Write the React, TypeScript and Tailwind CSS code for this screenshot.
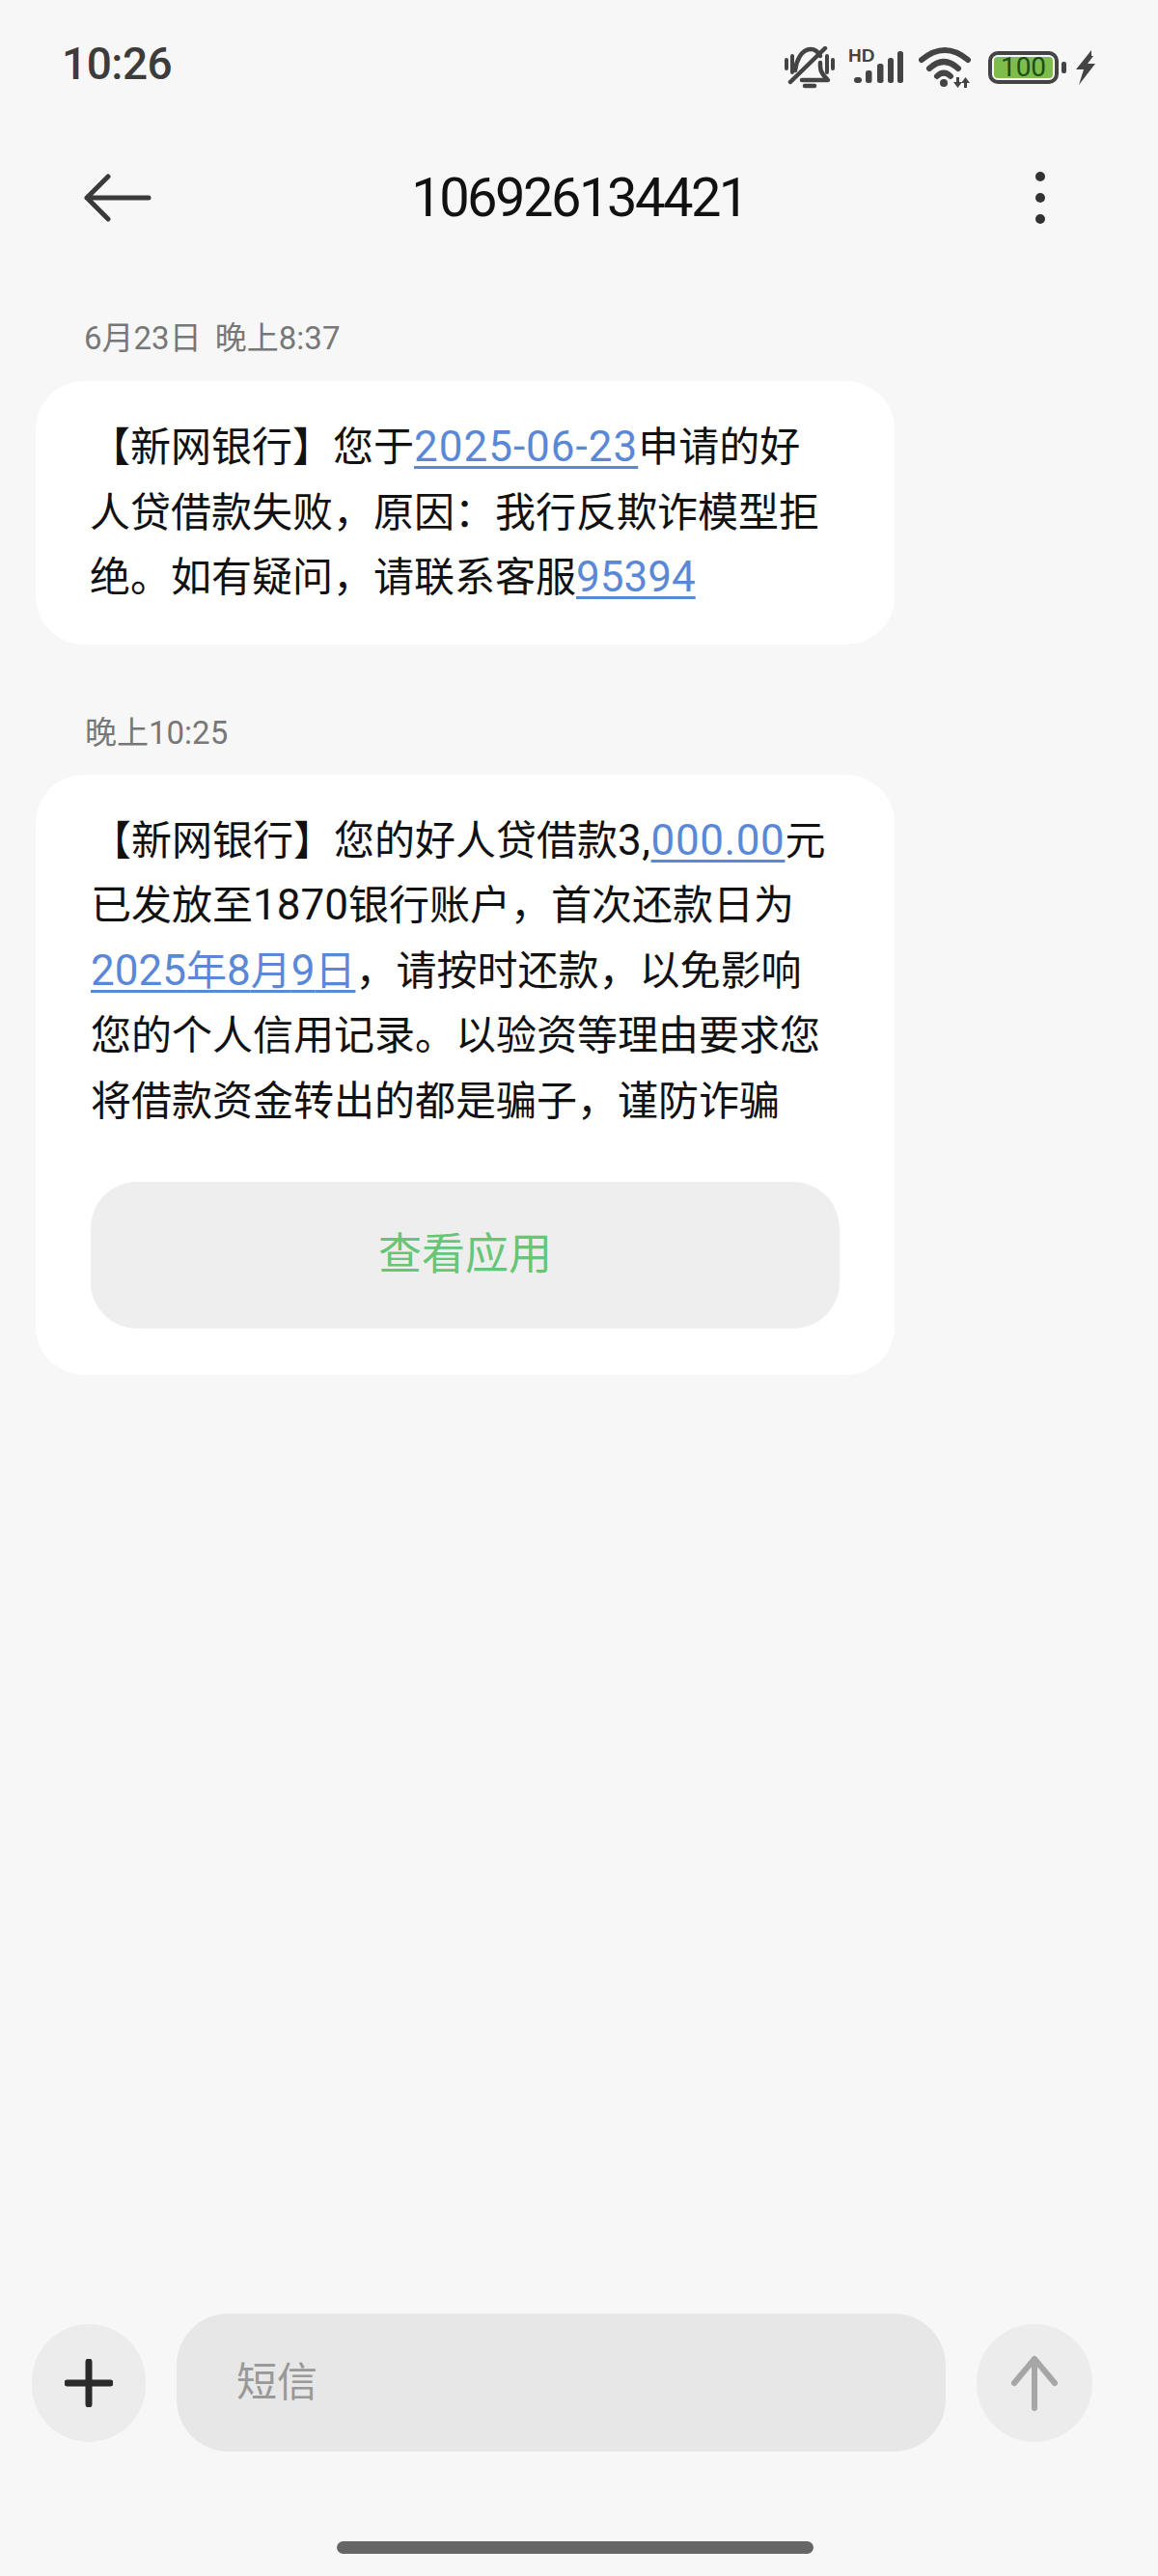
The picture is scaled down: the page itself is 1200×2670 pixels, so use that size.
const CJK = '[font-family:Roboto,"Noto_Sans_CJK_SC",sans-serif]';

function Link({ children }: { children: React.ReactNode }) {
  return <span className="text-[#5b88d6] underline decoration-[2.5px] underline-offset-[5px]">{children}</span>;
}

function Num({ children }: { children: React.ReactNode }) {
  return <span className="text-[44px]">{children}</span>;
}

function StatusIcons() {
  return (
    <div className="flex items-center">
      {/* muted bell */}
      <svg width="52" height="44" viewBox="0 0 52 44" fill="none" stroke="#444" strokeWidth="4.5" strokeLinecap="round" strokeLinejoin="round">
        <path d="M11 25 C12 16 17 3 27 3 C32 3 35 6 37 10" />
        <path d="M37 17 V21 C37 27 41 31 45 35 H18" />
        <path d="M6 37 L42 2" />
        <path d="M21 41 H31" />
        <path d="M2 14 V23 M8 10 V27 M44 10 V27 M50 14 V23" strokeWidth="4" />
      </svg>
      {/* signal */}
      <svg className="ml-[14px]" width="57" height="44" viewBox="0 0 57 44" fill="#444">
        <text x="0" y="16" fontSize="19" fontWeight="700" fontFamily="Liberation Sans">HD</text>
        <rect x="6" y="32" width="8" height="6" rx="3" />
        <rect x="18" y="25" width="6.5" height="13" rx="2.5" />
        <rect x="30" y="18" width="6.5" height="20" rx="2.5" />
        <rect x="41" y="12" width="6" height="26" rx="2.5" />
        <rect x="51" y="5" width="6" height="33" rx="2.5" />
      </svg>
      {/* wifi */}
      <svg className="ml-[16px]" width="54" height="44" viewBox="0 0 54 44" fill="none" stroke="#444" strokeWidth="6" strokeLinecap="round">
        <path d="M3 14 Q27 -6 51 14" />
        <path d="M11 23 Q26 9 41 23" />
        <path d="M19 31 Q26 24 33 31" />
        <circle cx="26" cy="38" r="4" fill="#444" stroke="none" />
        <path d="M39 32 H42 V37 H45 L40.5 43 L36 37 H39 Z M47 43 H50 V38 H53 L48.5 32 L44 38 H47 Z" fill="#444" stroke="none" />
      </svg>
      {/* battery */}
      <div className="ml-[18px] flex items-center">
        <div className="flex h-[34px] w-[73px] items-center justify-center rounded-[10px] border-[4px] border-[#444] p-[2px]">
          <div className="flex h-full w-full items-center justify-center rounded-[4px] bg-[#7ebd4c] font-['Roboto'] text-[28px] leading-none text-[#1c4f10]">
            100
          </div>
        </div>
        <div className="ml-[3px] h-[12px] w-[5px] rounded-[2px] bg-[#444]" />
      </div>
      {/* charging bolt */}
      <svg className="ml-[9px]" width="22" height="36" viewBox="0 0 22 36" fill="#444">
        <path d="M17 0 L1 20 L9 20 L4 36 L21 14 L13 14 L19 6 L17 6 Z" />
      </svg>
    </div>
  );
}

export default function App() {
  return (
    <div className={`flex h-[2670px] w-[1200px] flex-col overflow-hidden bg-[#f7f7f7] ${CJK}`}>
      {/* status bar */}
      <div className="flex h-[92px] items-end justify-between pl-[64px] pr-[64px]">
        <span className="text-[46px] font-medium leading-[52px] tracking-[-0.5px] text-[#3c3c3c]">10:26</span>
        <StatusIcons />
      </div>

      {/* header */}
      <div className="mt-[67px] grid h-[92px] grid-cols-[1fr_auto_1fr] items-center">
        <div className="pl-[87px]">
          <svg className="block" width="70" height="50" viewBox="0 0 70 50" fill="none" stroke="#3a3a3a" strokeWidth="5" strokeLinecap="round" strokeLinejoin="round">
            <path d="M3 25 H67 M25 3 L3 25 L25 47" />
          </svg>
        </div>
        <span className="text-[56px] leading-none tracking-[-2.5px] text-[#111]">106926134421</span>
        <div className="flex justify-end pr-[117px]">
          <div className="flex flex-col items-center gap-[12px]">
            <div className="h-[10px] w-[10px] rounded-full bg-[#333]" />
            <div className="h-[10px] w-[10px] rounded-full bg-[#333]" />
            <div className="h-[10px] w-[10px] rounded-full bg-[#333]" />
          </div>
        </div>
      </div>

      {/* messages */}
      <div className="flex flex-col pl-[37px]">
        <div className="mt-[75px] pl-[50px] text-[33px] leading-[50px] text-[#777] [word-spacing:6px]">6月23日 晚上8:37</div>
        <div className="mt-[19px] w-[890px] rounded-[50px] bg-white pb-[35px] pl-[58px] pr-[60px] pt-[35px] text-[42px] leading-[67.5px] text-[#111]">
          <p className="-ml-[2px]">
            【新网银行】您于<Link><span className="text-[44px] tracking-[1px]">2025-06-23</span></Link>申请的好人贷借款失败，原因：我行反欺诈模型拒绝。如有疑问，请联系客服<Link><Num>95394</Num></Link>
          </p>
        </div>

        <div className="mt-[67px] pl-[51px] text-[33px] leading-[50px] text-[#777]">晚上10:25</div>
        <div className="mt-[18px] w-[890px] rounded-[50px] bg-white pb-[48px] pl-[57px] pr-[57px] pt-[35px] text-[42px] leading-[67.5px] text-[#111]">
          <p>
            【新网银行】您的好人贷借款<span className="text-[44px] tracking-[0.6px]">3,</span><Link><span className="text-[44px] tracking-[0.6px]">000.00</span></Link>元已发放至<Num>1870</Num>银行账户，首次还款日为<Link><Num>2025</Num>年<Num>8</Num>月<Num>9</Num>日</Link>，请按时还款，以免影响您的个人信用记录。以验资等理由要求您将借款资金转出的都是骗子，谨防诈骗
          </p>
          <button className="mt-[50px] flex h-[152px] w-[776px] items-center justify-center rounded-[48px] bg-[#eeeeee] text-[45px] text-[#66c676]">
            查看应用
          </button>
        </div>
      </div>

      {/* input row */}
      <div className="mt-auto flex items-center pl-[33px] pr-[68px]">
        <div className="flex h-[122px] w-[118px] items-center justify-center rounded-full bg-[#ececec]">
          <svg width="50" height="50" viewBox="0 0 50 50" fill="none" stroke="#2a2a2a" strokeWidth="7" strokeLinecap="round">
            <path d="M25 3 V47 M3 25 H47" />
          </svg>
        </div>
        <div className="ml-[32px] flex h-[143px] w-[797px] items-center rounded-[54px] bg-[#e7e7e7] pl-[62px] text-[42px] text-[#999]">
          短信
        </div>
        <div className="ml-[32px] flex h-[122px] w-[120px] items-center justify-center rounded-full bg-[#ececec]">
          <svg width="50" height="58" viewBox="0 0 50 58" fill="none" stroke="#a6a6a6" strokeWidth="6" strokeLinecap="round" strokeLinejoin="round">
            <path d="M25 4 V55 M4 29 L25 4 L46 29" />
          </svg>
        </div>
      </div>

      {/* home indicator */}
      <div className="mb-[23px] mt-[93px] flex justify-center">
        <div className="ml-[-8px] h-[13px] w-[494px] rounded-full bg-[#666]" />
      </div>
    </div>
  );
}
